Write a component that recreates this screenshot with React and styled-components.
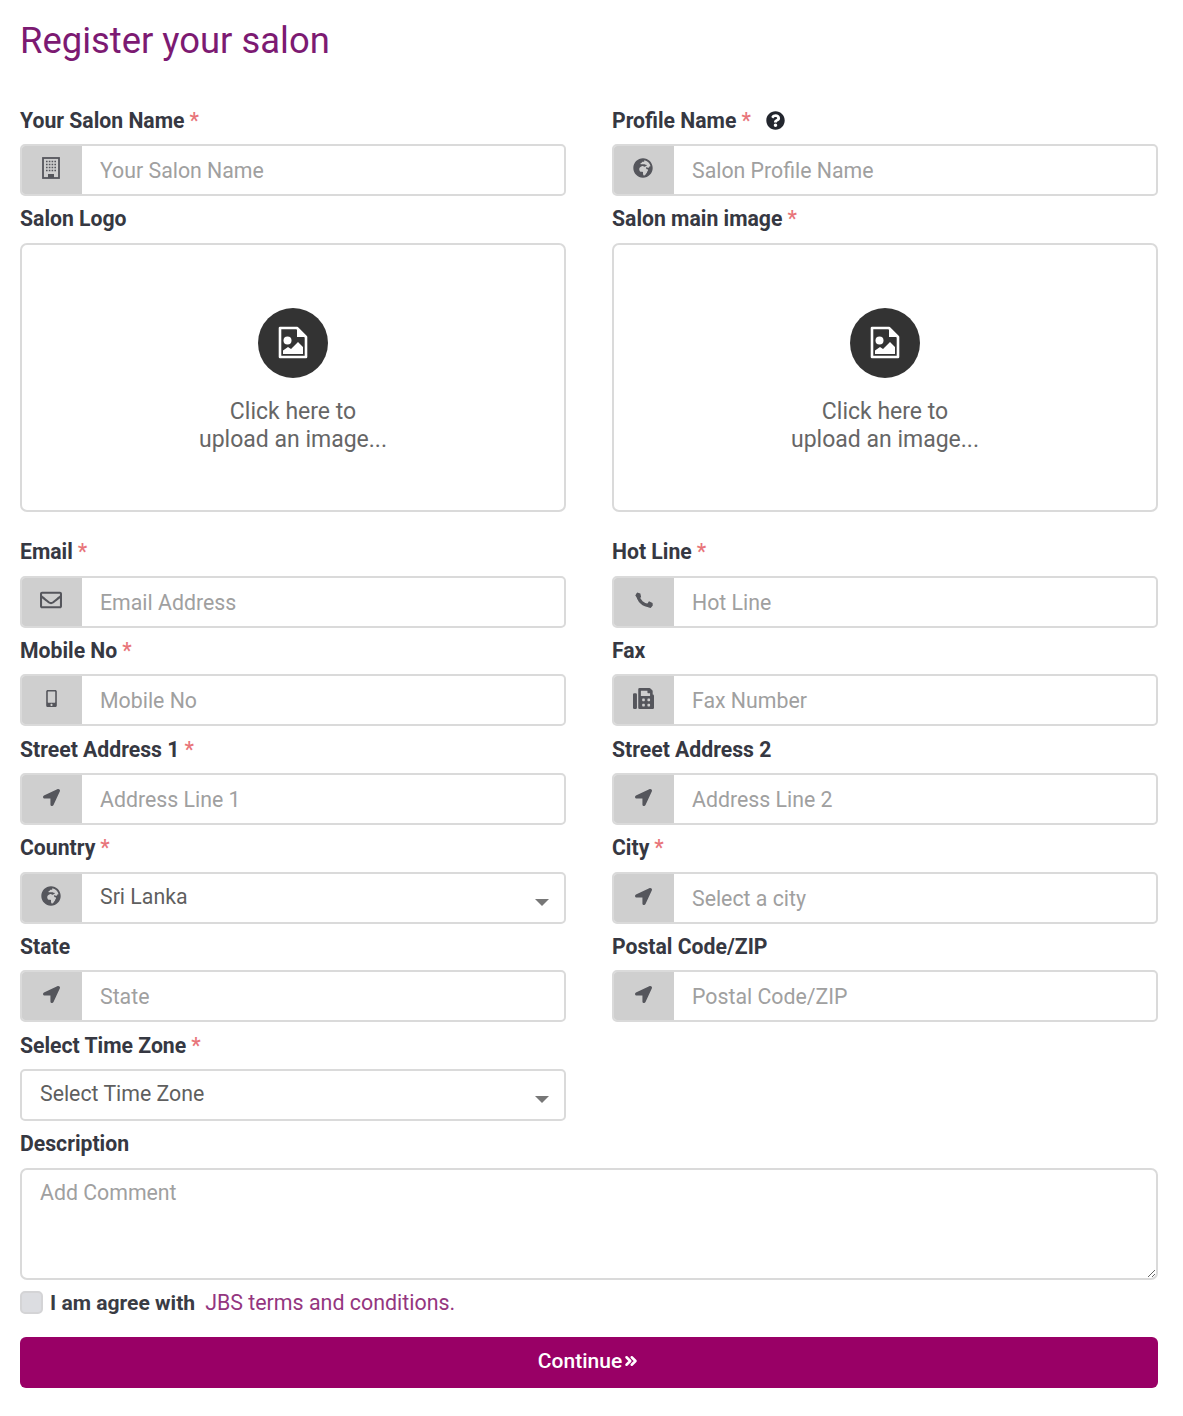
import React from 'react';
import styled, { createGlobalStyle } from 'styled-components';
import { FaGlobeAfrica, FaQuestionCircle, FaRegEnvelope, FaMobileAlt, FaFax, FaLocationArrow } from 'react-icons/fa';
import { ChevronsRight } from 'lucide-react';

const Global = createGlobalStyle`
  html, body { margin: 0; padding: 0; background: #fff; }
  body { font-family: Roboto, "Liberation Sans", sans-serif; }
  * { box-sizing: border-box; }
`;

const Page = styled.form`
  width: 1183px;
  height: 1416px;
  padding: 0 25px 0 20px;
  overflow: hidden;
`;

const Title = styled.h1`
  margin: 0;
  height: 97.3px;
  padding-top: 18px;
  font-size: 36.4px;
  line-height: 46px;
  font-weight: 400;
  color: #7c1a72;
`;

const Grid = styled.div`
  display: grid;
  grid-template-columns: 546px 546px;
  column-gap: 46px;
`;

const Field = styled.div`
  display: flex;
  flex-direction: column;
  grid-column: ${p => (p.$full ? '1 / -1' : 'auto')};
`;

const Label = styled.label`
  height: 46.7px;
  padding-bottom: 1px;
  display: flex;
  align-items: center;
  font-size: 21.2px;
  font-weight: 700;
  color: #363842;
`;

const Star = styled.span`
  color: #e8757a;
  font-weight: 500;
  margin-left: 5px;
`;

const Help = styled.span`
  display: inline-flex;
  margin-left: 15px;
  font-size: 19px;
  color: #23262e;
`;

const Group = styled.div`
  display: flex;
  height: 52px;
  border: 2px solid #dadada;
  border-radius: 5px;
  overflow: hidden;
  background: #fff;
  position: relative;
`;

const Addon = styled.span`
  flex: 0 0 62px;
  margin: -2px 0 -2px -2px;
  display: flex;
  align-items: center;
  justify-content: center;
  padding-bottom: 3px;
  background: #cfcfcf;
  color: #55565c;
  font-size: ${p => p.$size || 20}px;
`;

const Input = styled.input`
  flex: 1;
  min-width: 0;
  border: 0;
  outline: 0;
  padding: 1px 18px 0;
  font: 400 21.3px Roboto, sans-serif;
  color: #555;
  background: transparent;
  &::placeholder { color: #a0a0a0; opacity: 1; }
`;

const Select = styled.select`
  flex: 1;
  min-width: 0;
  border: 0;
  outline: 0;
  appearance: none;
  padding: 0 18px 3px;
  font: 400 21.3px Roboto, sans-serif;
  color: #5f5f5f;
  background: transparent;
`;

const Caret = styled.span`
  position: absolute;
  right: 15px;
  top: 25px;
  width: 0;
  height: 0;
  border-left: 7px solid transparent;
  border-right: 7px solid transparent;
  border-top: 7px solid #777;
  pointer-events: none;
`;

const Upload = styled.div`
  height: 269px;
  margin-bottom: 17.3px;
  border: 2px solid #dadada;
  border-radius: 7px;
  display: flex;
  flex-direction: column;
  align-items: center;
  padding-top: 63px;
`;

const UploadBadge = styled.span`
  width: 70px;
  height: 70px;
  border-radius: 50%;
  background: #333;
  display: flex;
  align-items: center;
  justify-content: center;
`;

const UploadText = styled.div`
  margin-top: 20px;
  font-size: 23px;
  line-height: 28.4px;
  text-align: center;
  color: #666;
`;

const TextArea = styled.textarea`
  display: block;
  width: 100%;
  height: 112px;
  border: 2px solid #dadada;
  border-radius: 7px;
  outline: 0;
  padding: 9px 18px;
  font: 400 21.3px/28px Roboto, sans-serif;
  color: #555;
  &::placeholder { color: #a0a0a0; opacity: 1; }
`;

const Agree = styled.div`
  display: flex;
  align-items: center;
  height: 46px;
  font-size: 21.1px;
`;

const Check = styled.input`
  appearance: none;
  width: 23px;
  height: 23px;
  margin: 0 7px 0 0;
  border: 2px solid #d4d4d6;
  border-radius: 5px;
  background: #dcdde1;
`;

const AgreeLabel = styled.span`
  font-weight: 700;
  color: #3a3c44;
  margin-right: 10px;
`;

const Terms = styled.a`
  font-size: 21.4px;
  color: #94367f;
  text-decoration: none;
`;

const Submit = styled.button`
  display: flex;
  align-items: center;
  justify-content: center;
  gap: 0;
  width: 100%;
  height: 51px;
  margin-top: 11px;
  padding: 0 0 2px;
  border: 0;
  border-radius: 6px;
  background: #990066;
  color: #fff;
  font: 500 21px Roboto, sans-serif;
`;

const FileImageIcon = () => (
  <svg width="30" height="33" viewBox="0 0 30 33" fill="none">
    <path d="M2 2h17l9 9v20H2z" stroke="#fff" strokeWidth="2.6" strokeLinejoin="round" />
    <path d="M19 2.5v8.5h8.5z" fill="#fff" />
    <circle cx="9.5" cy="14.5" r="4" fill="#fff" />
    <path d="M5 28v-3.5l5-3.5 3 2 7-7 5 5v7z" fill="#fff" />
  </svg>
);

const BuildingIcon = () => (
  <svg width="18" height="22" viewBox="0 0 18 22" fill="none">
    <rect x="1" y="1" width="16" height="20" stroke="#55565c" strokeWidth="1.8" />
    <path d="M4 4.5h10M4 7.5h10M4 10.5h10M4 13.5h10" stroke="#55565c" strokeWidth="1.5" strokeDasharray="1.6 1.2" />
    <path d="M6 21v-4h6v4z" fill="#55565c" />
  </svg>
);

const PhoneIcon = () => (
  <svg width="19" height="17" viewBox="0 0 18 16" fill="none">
    <path d="M3.6 2.6C3.8 8 9 13 15 13" stroke="#55565c" strokeWidth="3" strokeLinecap="round" />
    <path d="M1.2 3.2 3 .4 6 1.4l.8 3.6-3 1.4zM12.6 11l1.6-2.2 3.4 1.6.2 2.4-2 2.2-3-.8z" fill="#55565c" />
  </svg>
);

const UploadBox = () => (
  <Upload>
    <UploadBadge><FileImageIcon /></UploadBadge>
    <UploadText>Click here to<br />upload an image...</UploadText>
  </Upload>
);

const TextField = ({ label, required, help, icon, size, placeholder }) => (
  <Field>
    <Label>
      {label}
      {required && <Star>*</Star>}
      {help && <Help><FaQuestionCircle /></Help>}
    </Label>
    <Group>
      <Addon $size={size}>{icon}</Addon>
      <Input placeholder={placeholder} />
    </Group>
  </Field>
);

const Arrow = <FaLocationArrow />;

export default function App() {
  return (
    <Page>
      <Global />
      <Title>Register your salon</Title>
      <Grid>
        <TextField label="Your Salon Name" required icon={<BuildingIcon />} placeholder="Your Salon Name" />
        <TextField label="Profile Name" required help icon={<FaGlobeAfrica />} placeholder="Salon Profile Name" />
        <Field>
          <Label>Salon Logo</Label>
          <UploadBox />
        </Field>
        <Field>
          <Label>Salon main image<Star>*</Star></Label>
          <UploadBox />
        </Field>
        <TextField label="Email" required icon={<FaRegEnvelope />} size={22} placeholder="Email Address" />
        <TextField label="Hot Line" required icon={<PhoneIcon />} placeholder="Hot Line" />
        <TextField label="Mobile No" required icon={<FaMobileAlt />} size={17} placeholder="Mobile No" />
        <TextField label="Fax" icon={<FaFax />} size={21} placeholder="Fax Number" />
        <TextField label="Street Address 1" required icon={Arrow} size={17} placeholder="Address Line 1" />
        <TextField label="Street Address 2" icon={Arrow} size={17} placeholder="Address Line 2" />
        <Field>
          <Label>Country<Star>*</Star></Label>
          <Group>
            <Addon><FaGlobeAfrica /></Addon>
            <Select defaultValue="Sri Lanka"><option>Sri Lanka</option></Select>
            <Caret />
          </Group>
        </Field>
        <TextField label="City" required icon={Arrow} size={17} placeholder="Select a city" />
        <TextField label="State" icon={Arrow} size={17} placeholder="State" />
        <TextField label="Postal Code/ZIP" icon={Arrow} size={17} placeholder="Postal Code/ZIP" />
        <Field>
          <Label>Select Time Zone<Star>*</Star></Label>
          <Group>
            <Select defaultValue="Select Time Zone"><option>Select Time Zone</option></Select>
            <Caret />
          </Group>
        </Field>
        <div />
        <Field $full>
          <Label>Description</Label>
          <TextArea placeholder="Add Comment" />
        </Field>
      </Grid>
      <Agree>
        <Check type="checkbox" />
        <AgreeLabel>I am agree with</AgreeLabel>
        <Terms href="#">JBS terms and conditions.</Terms>
      </Agree>
      <Submit type="button">Continue<ChevronsRight size={18} strokeWidth={3.4} /></Submit>
    </Page>
  );
}
